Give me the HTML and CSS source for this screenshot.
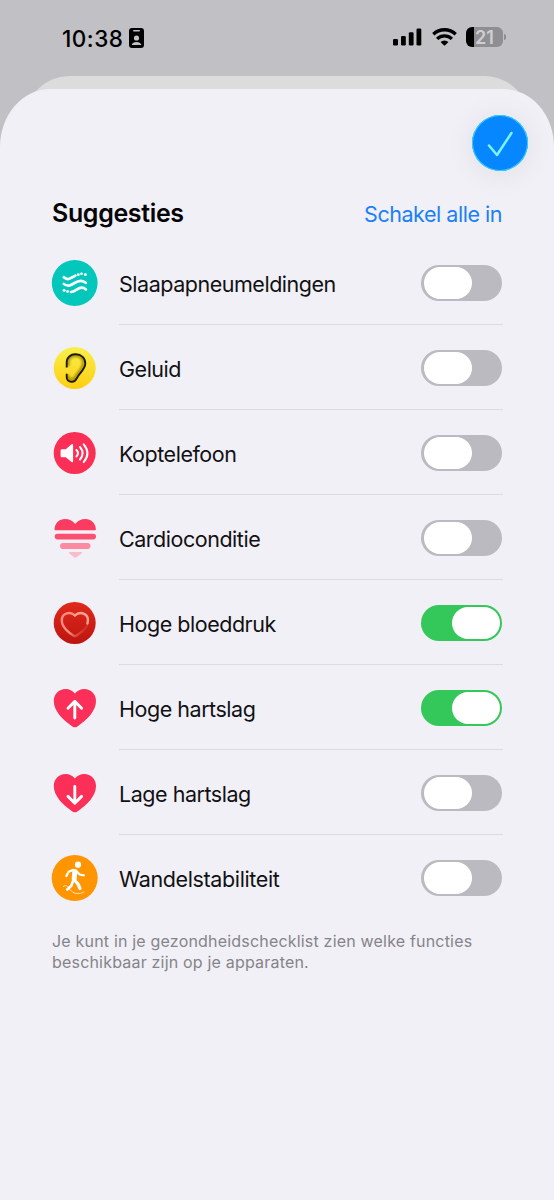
FILE: index.html
```html
<!DOCTYPE html>
<html lang="nl">
<head>
<meta charset="utf-8">
<title>Suggesties</title>
<link rel="stylesheet" href="styles.css">
</head>
<body>
<div class="screen">
  <header class="status">
    <div class="clock"><span>10:38</span>
      <svg width="15" height="20" viewBox="0 0 15 20"><rect width="15" height="20" rx="3"/><rect x="4" y="2" width="7" height="1.6" rx=".8" fill="#c1c0c5"/><circle cx="7.5" cy="10" r="2.6" fill="#c1c0c5"/><path d="M2.7 17c.4-4 9.2-4 9.6 0z" fill="#c1c0c5"/></svg>
    </div>
    <div class="signals">
      <svg width="29" height="18" viewBox="0 0 29 18"><rect x="0" y="11" width="5" height="6.5" rx="1.3"/><rect x="8" y="8" width="4.8" height="9.5" rx="1.3"/><rect x="15.8" y="4.3" width="4.8" height="13.2" rx="1.3"/><rect x="23.5" y="0.5" width="4.8" height="17" rx="1.3"/></svg>
      <svg width="25" height="18" viewBox="0 0 25 18"><g fill="none" stroke="#000" stroke-width="3.3"><path d="M1.3 6.300a16 16 0 0 1 22.4 0"/><path d="M5.1 10.900a10.6 10.6 0 0 1 14.8 0"/></g><path d="M8.6 14.1a5.7 5.7 0 0 1 7.8 0l-3.2 3.2q-.7.6-1.4 0z"/></svg>
      <div class="battery"><span>21</span></div><i class="battery-tip"></i>
    </div>
  </header>
  <div class="sheet-behind"></div>
  <main class="sheet">
    <div class="toolbar">
      <button class="done" aria-label="Gereed"><svg width="56" height="56" viewBox="0 0 56 56"><path d="M17 30.500l8 9.500 14.500-22" fill="none" stroke="#7df3ff" stroke-width="2.500" stroke-linecap="round" stroke-linejoin="round"/></svg></button>
    </div>
    <div class="heading"><h1>Suggesties</h1><a>Schakel alle in</a></div>
    <ul class="list">
      <li class="row"><svg class="icon" viewBox="0 0 48 48"><circle cx="23.700" cy="24" r="22.900" fill="#04c7bc"/><g fill="none" stroke="#fff" stroke-width="2.700" stroke-linecap="round"><path d="M12.800 18.300c4.300 4 7.600.3 11.600-1.700"/><path d="M12.800 25c7.500 5 10.500-3.500 17-3.200 2.400.1 3.700.8 5 1.900"/><path d="M20 33c4.500-.6 6.500-4.300 10.800-4.300 1.800 0 2.900.6 4.100 1.700"/></g><g fill="#fff"><circle cx="27.300" cy="15.700" r="1.400"/><circle cx="30.500" cy="14.800" r="1.400"/><circle cx="34.400" cy="15.600" r="1.500"/><circle cx="13.100" cy="31.300" r="1.500"/><circle cx="16.600" cy="32.500" r="1.400"/></g></svg>
        <div class="cell"><span>Slaapapneumeldingen</span><i class="toggle"></i></div></li>
      <li class="row"><svg class="icon" viewBox="0 0 48 48"><defs><linearGradient id="yellow" x2="0" y2="1"><stop stop-color="#f8f04b"/><stop offset="1" stop-color="#ffce12"/></linearGradient><filter id="soft"><feGaussianBlur stdDeviation="1"/></filter></defs><circle cx="23.700" cy="24" r="21" fill="url(#yellow)"/><g fill="none" stroke-linejoin="round"><path d="M17.300 22v-4c0-8.500 15.500-8.500 15 1-.3 6-4.900 8.100-6.800 12.300-1.800 4.200-6.300 5.500-8.200 2.500l-.3-3" stroke="#a38b00" stroke-width="2.500" filter="url(#soft)"/><path d="M15.700 23.500V18.500c0-5.200 4-8.200 8.800-8.200 5.900 0 9.800 3.700 9.800 9.200 0 4.200-2.500 6.500-6.600 11.700-2.200 2.900-2.700 6.600-6.500 6.600h-.8c-3 0-4.700-2-4.700-4.800v-3.300" stroke="#1d1a00" stroke-width="1.900"/></g></svg>
        <div class="cell"><span>Geluid</span><i class="toggle"></i></div></li>
      <li class="row"><svg class="icon" viewBox="0 0 48 48"><circle cx="23.700" cy="24" r="21" fill="#fb2f55"/><path d="M10.800 20.300h4l5.400-4.800q1.900-1.500 1.900.6v16q0 2.100-1.900.6l-5.400-4.400h-4q-1.200 0-1.200-1.200v-5.600q0-1.200 1.200-1.200z" fill="#fff"/><g fill="none" stroke="#fff" stroke-width="2" stroke-linecap="round"><path d="M25.500 21q3 3.200 0 6.400"/><path d="M29 18q5.300 6.200 0 12.500"/><path d="M32.700 15.300q7.500 9 0 17.800"/></g></svg>
        <div class="cell"><span>Koptelefoon</span><i class="toggle"></i></div></li>
      <li class="row"><svg class="icon" viewBox="0 0 48 48"><path d="M4.500 16.300q-1 0-1-1C3.800 9 8.500 5 14 5c4.300 0 7.500 1.700 10.200 5 2.700-3.300 5.900-5 10.200-5 5.500 0 10.200 4 10.500 10.300q0 1-1 1z" fill="#fb3b60"/><rect x="3.700" y="19.700" width="41.300" height="5.700" rx="2.800" fill="#fb5072"/><rect x="9" y="29" width="30.500" height="6" rx="3" fill="#fc8ba2"/><path d="M19.300 38h10.200q3 0 .9 1.600l-4.500 3.400q-1.600 1.300-3.200 0l-4.300-3.400q-2-1.600.9-1.600z" fill="#fcbccb"/></svg>
        <div class="cell"><span>Cardioconditie</span><i class="toggle"></i></div></li>
      <li class="row"><svg class="icon" viewBox="0 0 48 48"><defs><linearGradient id="red" x2="0" y2="1"><stop stop-color="#e02a1d"/><stop offset="1" stop-color="#bd1510"/></linearGradient><linearGradient id="fade" x1="0" y1="0" x2="1" y2=".7"><stop stop-color="#ff8d7d"/><stop offset=".6" stop-color="#ff8d7d"/><stop offset="1" stop-color="#c81d16"/></linearGradient></defs><circle cx="23.700" cy="24" r="21" fill="url(#red)"/><g fill="none" stroke-width="2.400" stroke-linecap="round"><path d="M36.300 27C33.500 31.500 28.500 34.800 25.300 36.700q-1.300.7-2.600 0C18.500 34.300 10.800 28.300 10.800 21.500c0-7.800 8.600-9.500 13.100-5" stroke="url(#fade)"/><path d="M23.900 16.500c4.800-4.700 13.700-2.400 13 5.500l-.5 2.500" stroke="#ffa595"/></g></svg>
        <div class="cell"><span>Hoge bloeddruk</span><i class="toggle on"></i></div></li>
      <li class="row"><svg class="icon" viewBox="0 0 48 48"><path d="M23.900 9.500C21.300 6.500 18.500 5 14.600 5 7.800 5 2.800 10 2.800 17c0 10 8.700 18.500 18.600 25.500q2.500 1.700 5 0C36.300 35.500 45 27 45 17c0-7-5-12-11.800-12-3.900 0-6.700 1.500-9.300 4.500z" fill="#fb2f57"/><path d="M23.800 34V17.500M17 24.200l6.800-6.800 6.800 6.800" fill="none" stroke="#fff" stroke-width="2.900" stroke-linecap="round" stroke-linejoin="round"/></svg>
        <div class="cell"><span>Hoge hartslag</span><i class="toggle on"></i></div></li>
      <li class="row"><svg class="icon" viewBox="0 0 48 48"><path d="M23.900 9.500C21.300 6.500 18.500 5 14.600 5 7.800 5 2.800 10 2.800 17c0 10 8.700 18.500 18.600 25.500q2.500 1.700 5 0C36.300 35.500 45 27 45 17c0-7-5-12-11.800-12-3.900 0-6.700 1.500-9.300 4.500z" fill="#fb2f57"/><path d="M23.800 17.500V34M17 27.400l6.800 6.800 6.800-6.800" fill="none" stroke="#fff" stroke-width="2.900" stroke-linecap="round" stroke-linejoin="round"/></svg>
        <div class="cell"><span>Lage hartslag</span><i class="toggle"></i></div></li>
      <li class="row"><svg class="icon" viewBox="0 0 48 48"><circle cx="23.700" cy="24" r="23" fill="#ff9500"/><circle cx="27" cy="10.700" r="3.100" fill="#fff"/><g fill="none" stroke="#fff" stroke-linecap="round" stroke-linejoin="round"><path d="M23.800 17.500l-.6 7.500" stroke-width="5"/><path d="M23.500 26l3.500 4 2 4.500" stroke-width="3.200"/><path d="M22 27l-1.700 4.700-4 3.800" stroke-width="2.600"/><path d="M22 15.900l-4.400 1.900-2.300 4.300M25.800 17.500l2.800 3 4.300.8" stroke-width="2.200"/><path d="M12.300 32.500c4-3 4.700 1.500 8 4.500s8 3.500 12.700 1" stroke-width="1" stroke-opacity=".7"/></g></svg>
        <div class="cell last"><span>Wandelstabiliteit</span><i class="toggle"></i></div></li>
    </ul>
    <p class="note">Je kunt in je gezondheidschecklist zien welke functies<br>beschikbaar zijn op je apparaten.</p>
  </main>
</div>
</body>
</html>
```
FILE: styles.css
```css
* { box-sizing: border-box; }
body { margin: 0; font-family: Inter, "Liberation Sans", sans-serif; color: #111114; }
.screen { height: 1200px; background: #c1c0c5; overflow: hidden; display: flex; flex-direction: column; }
.status { height: 76px; flex: none; display: flex; justify-content: space-between; padding: 26px 48px 0 62px; }
.clock { display: flex; align-items: center; gap: 6px; height: 24px; font-size: 22.500px; font-weight: 500; letter-spacing: .5px; color: #000; }
.signals { display: flex; align-items: center; height: 24px; margin-top: -1px; }
.signals svg { margin-right: 9.500px; display: block; }
.battery { width: 37px; height: 20px; border-radius: 6px; background: linear-gradient(90deg, #000 8px, #8f8e93 8px); color: #cfced3; font-size: 18px; font-weight: 600; line-height: 21px; text-align: center; }
.battery-tip { width: 2px; height: 6px; margin-left: 1px; border-radius: 0 3px 3px 0; background: #8f8e93; }
.sheet-behind { height: 60px; flex: none; margin: 0 24px -47px; background: #dcdcdc; border-radius: 46px 46px 0 0; }
.sheet { flex: 1; background: #f1f0f6; border-radius: 50px 50px 0 0 / 58px 58px 0 0; padding: 26px 51px 0; }
.toolbar { display: flex; justify-content: flex-end; height: 56px; margin-right: -25px; }
.done { width: 56px; height: 56px; padding: 0; border: 0; border-radius: 50%; background: #0787ff; box-shadow: inset 0 0 0 1px #36d0f8, 0 3px 30px rgba(0,0,0,.08); }
.done svg { display: block; }
.heading { height: 70px; display: flex; justify-content: space-between; align-items: center; padding: 14px 1px 0; }
h1 { margin: 0; font-size: 25px; font-weight: 600; line-height: 30px; letter-spacing: -.35px; color: #050507; }
.heading a { color: #1b80f7; font-size: 21.500px; line-height: 30px; letter-spacing: -.47px; padding-top: 1px; }
.list { list-style: none; margin: 0; padding: 0; }
.row { height: 85px; display: flex; gap: 20px; align-items: stretch; }
.icon { width: 48px; height: 48px; flex: none; margin-top: 18px; }
.cell { flex: 1; display: flex; justify-content: space-between; align-items: center; margin-bottom: 1px; padding-top: 1px; border-bottom: 1px solid #dcdbe0; font-size: 21.500px; letter-spacing: -.47px; }
.cell span { padding-top: 2px; }
.last { border-bottom-color: transparent; letter-spacing: -.37px; }
.toggle { width: 81px; height: 36px; margin-right: 1px; border-radius: 18px; background: #bbbac0; padding: 2px 2.500px; display: flex; }
.toggle::before { content: ""; width: 48px; height: 32px; border-radius: 16px; background: #fff; }
.on { background: #34c759; justify-content: flex-end; }
.note { margin: 10px 0 0 1px; font-size: 16px; line-height: 20.500px; letter-spacing: .19px; color: #858489; white-space: nowrap; }
```
